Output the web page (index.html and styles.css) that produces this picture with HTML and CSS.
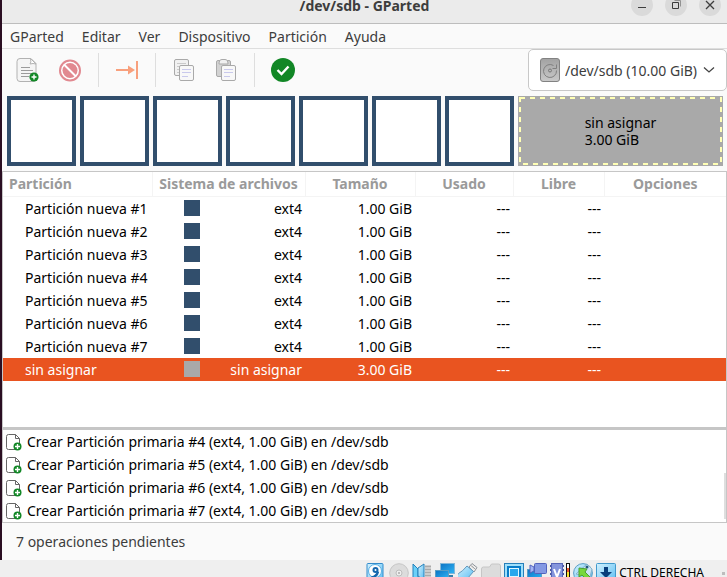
FILE: index.html
```html
<!DOCTYPE html>
<html lang="es">
<head>
<meta charset="utf-8">
<title>/dev/sdb - GParted</title>
<link rel="stylesheet" href="styles.css">
</head>
<body>
<svg class="defs" width="0" height="0" aria-hidden="true">
  <defs>
    <linearGradient id="sky" x1="0" y1="0" x2="1" y2="1"><stop offset="0" stop-color="#d4f1fd"/><stop offset="1" stop-color="#58bdf3"/></linearGradient>
    <linearGradient id="screen" x1="0" y1="0" x2="1" y2="1"><stop offset="0" stop-color="#0b74c4"/><stop offset="1" stop-color="#2fb4f5"/></linearGradient>
    <linearGradient id="steel" x1="0" y1="0" x2="0" y2="1"><stop offset="0" stop-color="#a2a2a2"/><stop offset="1" stop-color="#c9c9c9"/></linearGradient>
    <symbol id="new-op" viewBox="0 0 16 18">
      <path d="M2.500 1.500h7l4 4v9q0 2-2 2h-9q-2 0-2-2v-11q0-2 2-2z" fill="#fff" stroke="#666"/>
      <path d="M9.500 1.500v4h4" fill="none" stroke="#666"/>
      <circle cx="11.500" cy="13.500" r="4" fill="#128726"/>
      <path d="M9 13.500h5M11.500 11v5" stroke="#fff" stroke-width="1.400"/>
    </symbol>
  </defs>
</svg>
<div class="window">
  <header class="titlebar">
    <h1>/dev/sdb - GParted</h1>
    <div class="window-buttons">
      <button type="button" aria-label="Minimizar"><svg width="22" height="22"><path d="M7 13.500h8" stroke="#3d3d3d"/></svg></button>
      <button type="button" aria-label="Restaurar"><svg width="22" height="22"><path d="M7.500 8.500h6v6h-6z" fill="none" stroke="#3d3d3d"/><path d="M9.500 6.500h6v6" fill="none" stroke="#929292"/></svg></button>
      <button type="button" aria-label="Cerrar"><svg width="22" height="22"><path d="M7 7l8 8M15 7l-8 8" stroke="#3d3d3d" stroke-width="1.300"/></svg></button>
    </div>
  </header>
  <nav class="menubar">
    <button type="button">GParted</button>
    <button type="button">Editar</button>
    <button type="button">Ver</button>
    <button type="button">Dispositivo</button>
    <button type="button">Partición</button>
    <button type="button">Ayuda</button>
  </nav>
  <div class="toolbar">
    <div class="tools">
      <button type="button" aria-label="Nueva"><svg width="24" height="24" viewBox="0 0 24 24"><path d="M4 .500h11l5 5v15q0 3-3 3h-13q-3 0-3-3v-17q0-3 3-3z" fill="#f5f5f5" stroke="#b2b2b2"/><path d="M14.500 .500q1 4-.500 5.500q3-1 6 0z" fill="#fff" stroke="#b2b2b2"/><path d="M5 9.500h9M5 12.500h12M5 15.500h11M5 18.500h8" stroke="#9b9b9b"/><circle cx="18" cy="19" r="4.600" fill="#128726"/><path d="M15.500 19h5M18 16.500v5" stroke="#fff" stroke-width="1.400"/></svg></button>
      <button type="button" aria-label="Borrar" disabled><svg width="24" height="24" viewBox="0 0 24 24"><circle cx="12" cy="12.500" r="10" fill="#fff" stroke="#e18990" stroke-width="2"/><circle cx="12" cy="12.500" r="7.500" fill="#e18990"/><path d="M6 6.500l12 12" stroke="#fff" stroke-width="2"/></svg></button>
      <span class="separator"></span>
      <button type="button" aria-label="Redimensionar" disabled><svg width="24" height="24" viewBox="0 0 24 24"><path d="M1 12h14M22 3v18" stroke="#f8a07d" stroke-width="2"/><path d="M13 7.500l7 4.500-7 4.500z" fill="#f8a07d"/></svg></button>
      <span class="separator"></span>
      <button type="button" aria-label="Copiar" disabled><svg width="24" height="24" viewBox="0 0 24 24"><rect x="2.500" y="1.500" width="14" height="16" rx="1.500" fill="#f1f1f1" stroke="#a9a9a9"/><path d="M5 5.500h9M5 8.500h4M5 11.500h3M5 14.500h3" stroke="#cacaca"/><rect x="7.500" y="7.500" width="14" height="15" rx="1.500" fill="#f8f8f8" stroke="#a9a9a9"/><path d="M10 11.500h9M10 14.500h9M10 18.500h6" stroke="#c9c9ec"/></svg></button>
      <button type="button" aria-label="Pegar" disabled><svg width="24" height="24" viewBox="0 0 24 24"><rect x="2.500" y="2.500" width="14" height="16" rx="1.500" fill="#d2d2d2" stroke="#a9a9a9"/><path d="M5 6q0-4.500 3-4.500h3q3 0 3 4.500z" fill="#f0f0f0" stroke="#a9a9a9"/><rect x="7.500" y="7.500" width="14" height="15" rx="1.500" fill="#f8f8f8" stroke="#a9a9a9"/><path d="M10 11.500h9M10 14.500h9M10 18.500h6" stroke="#c9c9ec"/></svg></button>
      <span class="separator"></span>
      <button type="button" aria-label="Aplicar"><svg width="24" height="24" viewBox="0 0 24 24"><circle cx="12" cy="12" r="12" fill="#128726"/><path d="M6.500 12l4 4 7-7.500" fill="none" stroke="#fff" stroke-width="2.400"/></svg></button>
    </div>
    <label class="device">
      <svg width="20" height="24" viewBox="0 0 20 24" aria-hidden="true"><rect x=".500" y=".500" width="19" height="23" rx="2.500" fill="url(#steel)" stroke="#828282"/><path d="M13.500 7.500a6.500 6.500 0 1 0 3 5M12.500 10.500h4v-4" fill="none" stroke="#808080"/><circle cx="10" cy="12.500" r="1.500" fill="none" stroke="#777"/></svg>
      <select aria-label="Dispositivo"><option>/dev/sdb (10.00 GiB)</option></select>
      <svg width="12" height="8" viewBox="0 0 12 8" aria-hidden="true"><path d="M1 1.500l5 4.500 5-4.500" fill="none" stroke="#444" stroke-width="1.300"/></svg>
    </label>
  </div>
  <div class="disk-map">
    <div class="part"></div><div class="part"></div><div class="part"></div><div class="part"></div><div class="part"></div><div class="part"></div><div class="part"></div>
    <div class="part-free"><svg class="dashes" aria-hidden="true"><rect class="dash-line" x="2" y="2"/></svg><p>sin asignar<br>3.00 GiB</p></div>
  </div>
  <main class="partitions">
    <table>
      <colgroup><col class="c-name"><col class="c-fs"><col class="c-size"><col class="c-used"><col class="c-free"><col></colgroup>
      <thead><tr><th>Partición</th><th>Sistema de archivos</th><th>Tamaño</th><th>Usado</th><th>Libre</th><th>Opciones</th></tr></thead>
      <tbody>
        <tr><td>Partición nueva #1</td><td><div class="fs"><i></i>ext4</div></td><td>1.00 GiB</td><td>---</td><td>---</td><td></td></tr>
        <tr><td>Partición nueva #2</td><td><div class="fs"><i></i>ext4</div></td><td>1.00 GiB</td><td>---</td><td>---</td><td></td></tr>
        <tr><td>Partición nueva #3</td><td><div class="fs"><i></i>ext4</div></td><td>1.00 GiB</td><td>---</td><td>---</td><td></td></tr>
        <tr><td>Partición nueva #4</td><td><div class="fs"><i></i>ext4</div></td><td>1.00 GiB</td><td>---</td><td>---</td><td></td></tr>
        <tr><td>Partición nueva #5</td><td><div class="fs"><i></i>ext4</div></td><td>1.00 GiB</td><td>---</td><td>---</td><td></td></tr>
        <tr><td>Partición nueva #6</td><td><div class="fs"><i></i>ext4</div></td><td>1.00 GiB</td><td>---</td><td>---</td><td></td></tr>
        <tr><td>Partición nueva #7</td><td><div class="fs"><i></i>ext4</div></td><td>1.00 GiB</td><td>---</td><td>---</td><td></td></tr>
        <tr class="selected"><td>sin asignar</td><td><div class="fs"><i></i>sin asignar</div></td><td>3.00 GiB</td><td>---</td><td>---</td><td></td></tr>
      </tbody>
    </table>
  </main>
  <section class="operations">
    <ul>
      <li><svg width="16" height="18"><use href="#new-op"/></svg>Crear Partición primaria #4 (ext4, 1.00 GiB) en /dev/sdb</li>
      <li><svg width="16" height="18"><use href="#new-op"/></svg>Crear Partición primaria #5 (ext4, 1.00 GiB) en /dev/sdb</li>
      <li><svg width="16" height="18"><use href="#new-op"/></svg>Crear Partición primaria #6 (ext4, 1.00 GiB) en /dev/sdb</li>
      <li><svg width="16" height="18"><use href="#new-op"/></svg>Crear Partición primaria #7 (ext4, 1.00 GiB) en /dev/sdb</li>
    </ul>
    <span class="scroll-thumb"></span>
  </section>
  <footer class="statusbar">7 operaciones pendientes</footer>
</div>
<div class="vm-bar">
  <svg width="20" height="20" viewBox="0 0 20 20"><rect x="1" y=".500" width="16" height="19" rx="1" fill="url(#sky)" stroke="#338ccc"/><circle cx="9" cy="8" r="6.500" fill="#fff" stroke="#58aee4"/><path d="M5.500 14.500q5.500-1 6.500-6" fill="none" stroke="#1768ae" stroke-width="2.500"/><circle cx="9.500" cy="7" r="3" fill="#1768ae"/><circle cx="9.500" cy="7" r="1" fill="#fff"/></svg>
  <svg width="20" height="20" viewBox="0 0 20 20"><circle cx="10" cy="10" r="9.300" fill="#dcdcdc" stroke="#c5c5c5"/><circle cx="10" cy="10" r="3" fill="#eee" stroke="#bdbdbd"/><circle cx="10" cy="10" r="1" fill="#aaa"/></svg>
  <svg width="20" height="20" viewBox="0 0 20 20"><path d="M13 3.500h6M13 6.500h6M13 9.500h6M13 12.500h6" stroke="#aaa" stroke-width="2"/><path d="M1 1l5 5v8l-5 4z" fill="#6bd0f8" stroke="#2581bb"/><path d="M6 5l6-4v16l-6-4z" fill="url(#sky)" stroke="#2581bb"/></svg>
  <svg width="20" height="20" viewBox="0 0 20 20"><rect x="5.500" y=".500" width="14" height="10" fill="url(#screen)" stroke="#82b8d9"/><path d="M10 12h8v3h-8z" fill="#347fae"/><rect x=".500" y="7.500" width="13" height="8" fill="url(#screen)" stroke="#5a9dc4"/><path d="M4 16h7v3h-7z" fill="#26658f"/></svg>
  <svg width="20" height="20" viewBox="0 0 20 20"><path d="M11 4l3-3.500 5 4-3 4.500z" fill="#eee" stroke="#8e9399"/><path d="M13.500 3l3 2.500" stroke="#555" stroke-dasharray="1.500 1"/><path d="M9 3l6.500 5.500-6 7q-4 4-8 1t-1-6q4-2 8.500-7.500z" fill="url(#sky)" stroke="#5f98be"/></svg>
  <svg width="20" height="20" viewBox="0 0 20 20"><path d="M.500 19v-13q0-2 2-2h6l2-3h7q2 0 2 2v16z" fill="#dcdcdc" stroke="#c6c6c6"/></svg>
  <svg width="20" height="20" viewBox="0 0 20 20"><rect x=".500" y=".500" width="19" height="18" fill="#9edffa" stroke="#267fba"/><rect x="3" y="3" width="14" height="12" fill="#087cc9"/><rect x="5.500" y="5.500" width="9" height="8" fill="#28a7ed" stroke="#dff7ff"/></svg>
  <svg width="20" height="20" viewBox="0 0 20 20"><rect x=".500" y="6.500" width="14" height="10" fill="url(#screen)" stroke="#5a9dc4"/><path d="M4 17h8v3h-8z" fill="#26658f"/><rect x="7.500" y=".500" width="12" height="10" rx="1" fill="#8398e3" stroke="#5263bd"/><path d="M3 2l4 2v4l-4 2z" fill="#a5b4f3" stroke="#5263bd"/></svg>
  <svg width="20" height="20" viewBox="0 0 20 20"><path d="M0 3h14M0 7h14M0 11h14M0 15h14" stroke="#48549f" stroke-width="2" stroke-dasharray="2 10"/><rect x="1.500" y=".500" width="11" height="19" fill="#8595dc" stroke="#5665b7"/><path d="M4 6l3 8 3-8" fill="none" stroke="#fff" stroke-width="2"/><rect x="16" y="0" width="4" height="20" fill="#111"/><path d="M18 1v4" stroke="#fff" stroke-width="2"/><path d="M18 5v5" stroke="#f6562d" stroke-width="2"/><path d="M18 9v11" stroke="#f9e52f" stroke-width="2"/></svg>
  <svg width="20" height="20" viewBox="0 0 20 20"><circle cx="10" cy="10" r="9.400" fill="url(#sky)" stroke="#5a9dc4"/><path d="M3 11L14 1l5 5-2 8z" fill="#cbe4f4" stroke="#84b3cc"/><circle cx="14" cy="4" r="1.500" fill="#23597d"/><path d="M6 5l8 1-2 3 7 7-3 3-7-7-3 2z" fill="#77d83d" stroke="#4a9f33"/></svg>
  <svg width="20" height="20" viewBox="0 0 20 20"><rect x=".500" y=".500" width="19" height="19" rx="1" fill="url(#sky)" stroke="#4199cc"/><path d="M8 4h4v5h4l-6 6-6-6h4z" fill="#073d7b"/></svg>
  <span>CTRL DERECHA</span>
  <svg class="grip" width="8" height="8"><path d="M4 0h3v3H4zM0 5h3v3H0zM4 5h3v3H4z" fill="#bdbdbd"/></svg>
</div>
</body>
</html>
```
FILE: styles.css
```css
* { box-sizing: border-box; }
html, body { height: 100%; }
body {
  margin: 0;
  display: flex;
  flex-direction: column;
  overflow: hidden;
  background: #efefef;
  color: #000;
  font: 14px/23px "Noto Sans", "Open Sans", sans-serif;
}
.defs { position: absolute; }
svg { display: block; flex: none; }
button, select {
  font: inherit;
  color: inherit;
  background: none;
  border: 0;
  padding: 0;
  margin: 0;
}
.window {
  flex: 1;
  min-height: 0;
  display: flex;
  flex-direction: column;
  border-left: 2px solid #2a0e22;
  background: #fafafa;
}

.titlebar {
  flex: none;
  display: grid;
  grid-template-columns: 1fr auto 1fr;
  height: 24px;
  background: #ebebeb;
  border-bottom: 1px solid #bdbdbd;
  color: #3d3d3d;
}
.titlebar h1 {
  grid-column: 2;
  margin: 0;
  font-size: 14px;
  line-height: 12px;
}
.window-buttons {
  display: flex;
  align-items: flex-end;
  justify-content: flex-end;
  gap: 12px;
  height: 16px;
  padding-right: 6px;
}
.window-buttons button { border-radius: 50%; background: #dadada; }

.menubar {
  flex: none;
  display: flex;
  gap: 2px;
  height: 25px;
  border-bottom: 1px solid #dedede;
  color: #3d3d3d;
}
.menubar button { padding: 0 8px; }

.toolbar {
  flex: none;
  display: flex;
  justify-content: space-between;
  height: 42px;
}
.tools { display: flex; align-items: center; padding-left: 5px; }
.tools button { padding: 0 9px; }
.separator { width: 1px; height: 34px; margin: 0 7px; background: #dedede; }
.device {
  display: flex;
  align-items: center;
  gap: 5px;
  padding: 0 11px;
  border: 1px solid #c8c8c8;
  border-radius: 5px;
  background: #fff;
  color: #3d3d3d;
}
.device select { appearance: none; }

.disk-map {
  flex: none;
  display: grid;
  grid-template-columns: repeat(7, 69fr) 205fr;
  grid-template-rows: 100%;
  gap: 4px;
  height: 70px;
  margin: 5px 4px 5px 5px;
}
.part { border: 4px solid #314e6c; background: #fff; }
.part-free {
  display: grid;
  grid-template-rows: 100%;
  align-items: center;
  justify-items: center;
  background: #a9a9a9;
  line-height: 17px;
}
.part-free > * { grid-area: 1 / 1; }
.part-free p { margin: 0; }
.dashes { width: 100%; height: 100%; }
.dash-line {
  width: calc(100% - 4px);
  height: calc(100% - 4px);
  fill: none;
  stroke: #ffffb5;
  stroke-width: 2px;
  stroke-dasharray: 5 5;
}

.partitions {
  flex: 1;
  min-height: 0;
  overflow: hidden;
  background: #fff;
  border: 1px solid #c6c6c6;
  border-bottom: 0;
}
table { width: 100%; table-layout: fixed; border-collapse: collapse; }
.c-name { width: 149px; }
.c-fs { width: 153px; }
.c-size { width: 110px; }
.c-used { width: 98px; }
.c-free { width: 91px; }
th {
  height: 24px;
  padding: 0;
  border-right: 1px solid #f4f4f4;
  border-bottom: 1px solid #f4f4f4;
  color: #9a9a9a;
  text-align: center;
  white-space: nowrap;
}
th:first-child { padding-left: 6px; text-align: left; }
th:last-child { border-right: 0; }
td { height: 23px; padding: 0 3px 0 0; text-align: right; white-space: nowrap; }
td:first-child { padding: 0 0 0 22px; text-align: left; }
.fs { display: flex; align-items: center; justify-content: space-between; padding-left: 32px; }
.fs i { width: 16px; height: 16px; background: #314e6c; }
.selected { background: #e95420; color: #fff; }
.selected .fs i { background: #a9a9a9; }

.operations {
  flex: none;
  display: flex;
  justify-content: space-between;
  align-items: flex-end;
  background: #fff;
  border: 1px solid #c6c6c6;
  border-top: 3px solid #c6c6c6;
}
.operations ul { margin: 0; padding: 0 0 0 3px; list-style: none; }
.operations li { display: flex; align-items: center; gap: 5px; }
.scroll-thumb { width: 2px; height: 46px; margin-bottom: 3px; background: #dedede; }
.statusbar { flex: none; padding: 7px 14px; color: #3d3d3d; }

.vm-bar {
  flex: none;
  display: flex;
  justify-content: flex-end;
  gap: 3px;
  height: 17px;
  padding: 3px 1px 0 0;
  overflow: hidden;
  font: 12px/20px "Noto Sans", sans-serif;
}
.grip { margin: 9px 0 0 11px; }
```
